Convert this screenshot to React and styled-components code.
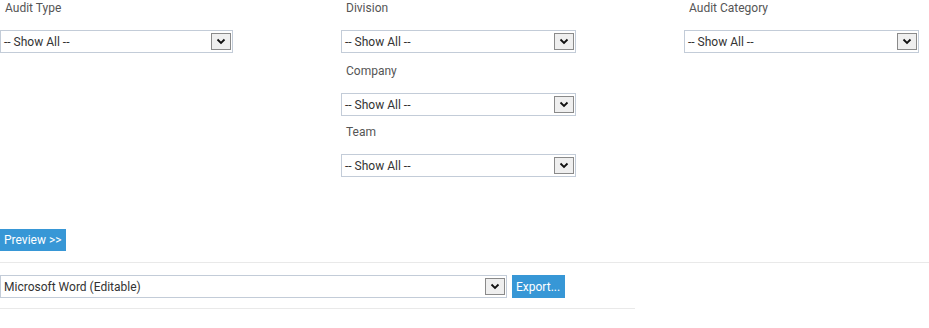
import React from 'react'
import styled, { createGlobalStyle } from 'styled-components';

const GlobalStyle = createGlobalStyle`
  body {
    margin: 0;
    background: #fff;
    font-family: Roboto, "Liberation Sans", Arial, sans-serif;
    font-size: 12px;
    color: #333;
  }
`;

const Page = styled.div`
  width: 929px;
  height: 328px;
  overflow: hidden;
`;

const Filters = styled.div`
  display: grid;
  grid-template-columns: 341px 343px 245px;
  align-items: start;
`;

const Column = styled.div`
  display: flex;
  flex-direction: column;
`;

const Label = styled.div`
  padding-left: 5px;
  height: 30px;
  line-height: 16px;
  color: #555;
  font-size: 12px;
`;

const Field = styled.div`
  margin-bottom: ${({ gap }) => gap || 0}px;
`;

const SelectBox = styled.div`
  box-sizing: border-box;
  width: ${({ width }) => width}px;
  height: 23px;
  border: 1px solid #c3ccd8;
  display: flex;
  align-items: center;
  justify-content: space-between;
  padding: 0 1px 0 3px;
  background: #fff;
  color: #333;
  font-size: 12px;
`;

const Arrow = styled.div`
  box-sizing: border-box;
  width: 20px;
  height: 17px;
  border: 1px solid #8a8a8a;
  background: #efefef;
  display: flex;
  align-items: center;
  justify-content: center;
`;

const BlueButton = styled.div`
  display: inline-flex;
  align-items: center;
  height: ${({ tall }) => (tall ? 23 : 22)}px;
  padding: 0 5px 0 4px;
  background: #3797d6;
  color: #fff;
  font-size: 12px;
`;

const PreviewRow = styled.div`
  margin-top: 52px;
  margin-bottom: 11px;
`;

const Rule = styled.div`
  height: 1px;
  width: ${({ width }) => width};
  background: #e9e9e9;
`;

const ExportRow = styled.div`
  display: flex;
  align-items: center;
  gap: 5px;
  padding: 12px 0 10px;
`;

function Chevron() {
  return (
    <svg width="10" height="7" viewBox="0 0 10 7">
      <path d="M1.5 1.5 L5 5 L8.5 1.5" fill="none" stroke="#111" strokeWidth="1.8" />
    </svg>
  );
}

function Select({ value = '-- Show All --', width = 235 }) {
  return (
    <SelectBox width={width}>
      <span>{value}</span>
      <Arrow><Chevron /></Arrow>
    </SelectBox>
  );
}

export default function App() {
  return (
    <Page>
      <GlobalStyle />
      <Filters>
        <Column>
          <Label>Audit Type</Label>
          <Select width={233} />
        </Column>
        <Column>
          <Label>Division</Label>
          <Field gap={10}><Select /></Field>
          <Label>Company</Label>
          <Field gap={8}><Select /></Field>
          <Label>Team</Label>
          <Select />
        </Column>
        <Column>
          <Label>Audit Category</Label>
          <Select />
        </Column>
      </Filters>
      <PreviewRow>
        <BlueButton>Preview &gt;&gt;</BlueButton>
      </PreviewRow>
      <Rule width="929px" />
      <ExportRow>
        <Select value="Microsoft Word (Editable)" width={507} />
        <BlueButton tall>Export...</BlueButton>
      </ExportRow>
      <Rule width="635px" />
    </Page>
  );
}
